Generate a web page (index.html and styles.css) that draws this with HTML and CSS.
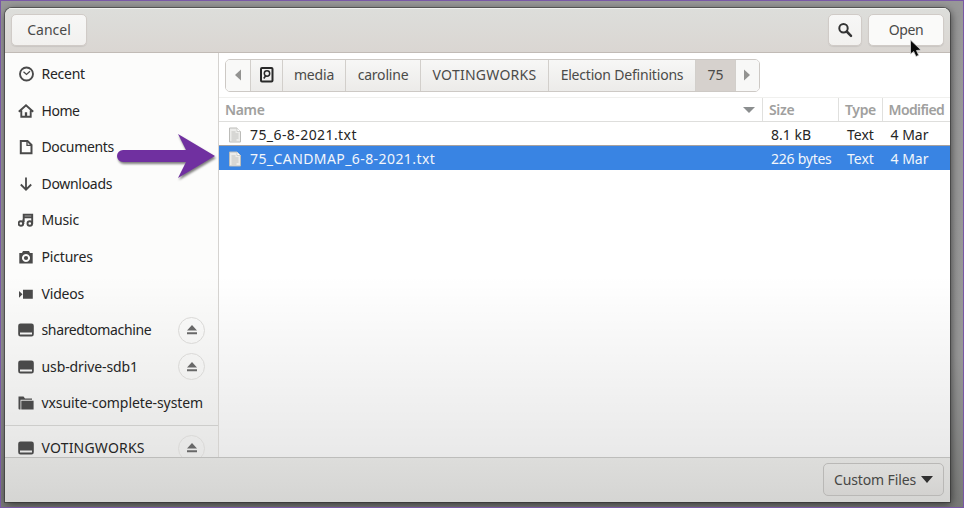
FILE: index.html
```html
<!DOCTYPE html>
<html lang="en">
<head>
<meta charset="utf-8">
<title>Open File</title>
<link rel="stylesheet" href="styles.css">
</head>
<body>
<svg class="defs" width="0" height="0" aria-hidden="true">
  <symbol id="drive" viewBox="0 0 16 16"><path fill-rule="evenodd" d="M2.500 1.500h11Q15.800 1.500 15.800 3.700v8.600q0 2.200-2.300 2.200h-11Q.2 14.500.2 12.300V3.700Q.2 1.500 2.500 1.500zM2 10.500v2h12v-2z"/></symbol>
  <symbol id="eject" viewBox="0 0 12 12"><path d="M6 1l5 5.500H1zM1 8.300h10V10.300H1z"/></symbol>
  <symbol id="file" viewBox="0 0 14 16"><path d="M1.500 1h7.500l3.500 3.500V15h-11z" fill="#ececea" stroke="#bcbcb9"/><path d="M9 1v3.500h3.500" fill="#fff" stroke="#c6c6c3" stroke-width=".8"/><path d="M3.500 5h4M3.500 7h7M3.500 9h7M3.500 11h7M3.500 13h5" stroke="#bdbdba" stroke-width=".9"/></symbol>
</svg>
<div class="window">
  <header class="titlebar">
    <button class="btn cancel"><span>Cancel</span></button>
    <div class="actions">
      <button class="btn search" aria-label="Search"><svg width="16" height="16" viewBox="0 0 16 16" fill="none" stroke="#343434"><circle cx="6.500" cy="6.300" r="4.200" stroke-width="2"/><path d="M9.700 9.500l4.300 4.300" stroke-width="2.500" stroke-linecap="round"/></svg></button>
      <button class="btn open"><span>Open</span></button>
    </div>
  </header>
  <main class="content">
    <nav class="places">
      <a class="place"><svg viewBox="0 0 16 16" fill="none" stroke="#4a4a4a"><circle cx="8.500" cy="8" r="6.500" stroke-width="1.900"/><path d="M5.500 5.700l3 2.700 3.500-3.200" stroke-width="1.300"/></svg><span class="recent">Recent</span></a>
      <a class="place"><svg viewBox="0 0 16 16" fill="none" stroke="#4a4a4a"><path d="M.8 8.700L8 2.200l7.200 6.500M3.300 7.500v6.200h9.400V7.500" stroke-width="1.900"/><path d="M8 14V9.300" stroke-width="2.300"/></svg><span class="home">Home</span></a>
      <a class="place"><svg viewBox="0 0 16 16" fill="none" stroke="#4a4a4a"><path d="M2.800 2h6.700L13.500 6v8.300H2.800z" stroke-width="2"/><path d="M9 2v4.300h4.300" stroke-width="1.300"/></svg><span class="documents">Documents</span></a>
      <a class="place"><svg viewBox="0 0 16 16" fill="none" stroke="#4a4a4a" stroke-width="1.800"><path d="M8 1.500v12M2.800 8.500L8 13.700l5.200-5.200"/></svg><span class="downloads">Downloads</span></a>
      <a class="place"><svg viewBox="0 0 16 16" fill="none" stroke="#4a4a4a" stroke-width="1.900"><circle cx="2.900" cy="11.500" r="2.300"/><circle cx="11.800" cy="11.500" r="2.300"/><path d="M5.300 12V7.500M5.700 10V2.700h8.500V12M5.500 5.200h8"/></svg><span class="music">Music</span></a>
      <a class="place"><svg viewBox="0 0 16 16" fill="#4a4a4a"><path fill-rule="evenodd" d="M5 2h6l1 2h2.700v10.500H1.300V4H4zM8 4.900a4 4 0 1 0 .01 0z"/><circle cx="8" cy="9" r="2.100"/></svg><span class="pictures">Pictures</span></a>
      <a class="place"><svg viewBox="0 0 16 16" fill="#4a4a4a"><path d="M5 3.800h9.800v9H5zM1 5l3.500 3.300L1 11.700z"/></svg><span class="videos">Videos</span></a>
      <a class="place"><svg fill="#4a4a4a"><use href="#drive"/></svg><span class="shared">sharedtomachine</span><i class="eject"><svg><use href="#eject"/></svg></i></a>
      <a class="place"><svg fill="#4a4a4a"><use href="#drive"/></svg><span class="usb">usb-drive-sdb1</span><i class="eject"><svg><use href="#eject"/></svg></i></a>
      <a class="place"><svg viewBox="0 0 16 16" fill="#4a4a4a"><path d="M.5 1.500h5l1.500 2h7v1.300H2.500V14.500H1.500Q.5 14.500.5 13.500z"/><path d="M3.300 5.700h12.300v8.800H3.300z"/></svg><span class="vxsuite">vxsuite-complete-system</span></a>
      <a class="place mounted"><svg fill="#4a4a4a"><use href="#drive"/></svg><span class="voting">VOTINGWORKS</span><i class="eject"><svg><use href="#eject"/></svg></i></a>
    </nav>
    <section class="browser">
      <div class="pathbar">
        <button class="crumb back" aria-label="Back"><svg width="8" height="12" viewBox="0 0 8 12"><path d="M7 .5v11L1 6z" fill="#939391"/></svg></button>
        <button class="crumb disk" aria-label="File system"><svg width="16" height="16" viewBox="0 0 16 16" fill="none" stroke="#292929"><rect x="2" y="1" width="11.500" height="13.500" rx="1" stroke-width="2"/><circle cx="8" cy="6.500" r="2.700" stroke-width="1.500"/><path d="M4.800 11.500l2.200-3.200" stroke-width="1.600"/></svg></button>
        <button class="crumb media"><span>media</span></button>
        <button class="crumb caroline"><span>caroline</span></button>
        <button class="crumb works"><span>VOTINGWORKS</span></button>
        <button class="crumb election"><span>Election Definitions</span></button>
        <button class="crumb current"><span>75</span></button>
        <button class="crumb next" aria-label="Forward"><svg width="8" height="12" viewBox="0 0 8 12"><path d="M1 .5v11L7 6z" fill="#939391"/></svg></button>
      </div>
      <div class="row head">
        <div class="cell name"><span>Name</span><svg class="sort" width="12" height="6" viewBox="0 0 12 6"><path d="M0 0h12L6 6z" fill="#8b8e8f"/></svg></div>
        <div class="cell size"><span>Size</span></div><div class="cell type"><span>Type</span></div><div class="cell date"><span class="modified">Modified</span></div>
      </div>
      <div class="row">
        <div class="cell name"><svg class="file"><use href="#file"/></svg><span class="file-name">75_6-8-2021.txt</span></div>
        <div class="cell size"><span>8.1 kB</span></div><div class="cell type"><span>Text</span></div><div class="cell date"><span>4 Mar</span></div>
      </div>
      <div class="row selected">
        <div class="cell name"><svg class="file"><use href="#file"/></svg><span class="file-name">75_CANDMAP_6-8-2021.txt</span></div>
        <div class="cell size"><span class="bytes">226 bytes</span></div><div class="cell type"><span>Text</span></div><div class="cell date"><span>4 Mar</span></div>
      </div>
    </section>
  </main>
  <footer class="bottom"><button class="filter"><span>Custom Files</span><svg width="12" height="7" viewBox="0 0 12 7"><path d="M0 0h12L6 7z" fill="#303030"/></svg></button></footer>
</div>
<svg class="arrow" width="106" height="52" viewBox="0 0 106 52"><path d="M8 18h63L63 2l37 22L63 46l8-16H8a6 6 0 0 1 0-12z" fill="#7030a0"/></svg>
<svg class="pointer" width="14" height="20" viewBox="0 0 14 20"><path d="M1.500 1v14l3.200-2.500 2.300 5 2.700-1.200-2.200-4.800 4.500-.5z" fill="#080808" stroke="#d5d5d5" stroke-width=".8"/></svg>
</body>
</html>
```

FILE: styles.css
```css
* { box-sizing: border-box; }
html, body { height: 100%; }
body {
  margin: 0;
  padding: 7px 13px 5px 4px;
  overflow: hidden;
  border: 1px solid #7958a6;
  background: linear-gradient(#989898, #969696 70%, #777876);
  font: 14px/20px "Noto Sans", sans-serif;
  color: #252525;
}
.defs { position: absolute; }
button { font: inherit; color: inherit; margin: 0; padding: 0; display: flex; align-items: center; justify-content: center; }
span { white-space: nowrap; }
svg { flex: none; }
.window {
  height: 494px;
  display: flex;
  flex-direction: column;
  overflow: hidden;
  border-radius: 7px 7px 0 0;
  background: #fff;
  box-shadow: 0 0 0 1px rgba(50, 50, 50, .55), 1px 2px 8px rgba(0, 0, 0, .6);
}
.titlebar {
  height: 45px;
  flex: none;
  display: flex;
  justify-content: space-between;
  align-items: flex-start;
  padding: 6px 6px 0;
  background: linear-gradient(#dddedb, #dad6d2);
  border-bottom: 1px solid #c1bbb6;
  box-shadow: inset 0 1px #f0f1ef;
}
.btn {
  height: 32px;
  border: 1px solid #d0cbc7;
  border-radius: 5px;
  background: linear-gradient(#f7f7f6, #f2f1ef);
  box-shadow: 0 1px 1px rgba(0, 0, 0, .08);
  color: #4a4a48;
}
.cancel { width: 76px; }
.search { width: 34px; }
.open { width: 76px; background: #fafaf9; letter-spacing: -.4px; }
.actions { display: flex; gap: 6px; }
.content {
  flex: 1;
  min-height: 0;
  display: flex;
  background: linear-gradient(transparent 55%, rgba(0, 0, 0, .085));
}
.places {
  width: 214px;
  flex: none;
  overflow: hidden;
  padding-top: 3px;
  border-right: 1px solid #d5d3d0;
  background: rgba(120, 110, 70, .025);
}
.place {
  height: 36.55px;
  display: flex;
  align-items: center;
  padding: 0 13px;
}
.place > svg { width: 16px; height: 16px; margin-right: 7.500px; }
.recent { letter-spacing: -.25px; }
.home { letter-spacing: -.45px; }
.documents { letter-spacing: -.35px; }
.downloads { letter-spacing: -.3px; }
.music, .videos, .pictures { letter-spacing: -.18px; }
.shared { letter-spacing: -.36px; }
.usb { letter-spacing: -.1px; }
.vxsuite { letter-spacing: -.08px; }
.voting { letter-spacing: .2px; }
.eject {
  width: 27px;
  height: 27px;
  display: grid;
  place-items: center;
  margin-left: auto;
  border: 1px solid #dad9d7;
  border-radius: 50%;
}
.eject svg { width: 12px; height: 12px; fill: #686868; }
.mounted { height: 45px; border-top: 1px solid #cdcdcb; margin-top: 4px; }
.browser { flex: 1; min-width: 0; }
.pathbar {
  width: 535px;
  height: 33px;
  display: flex;
  margin: 6px 0 5px 6px;
  overflow: hidden;
  border: 1px solid #cdc9c5;
  border-radius: 5px;
}
.crumb {
  padding-bottom: 1px;
  border: 0;
  border-right: 1px solid #d2cfcb;
  background: linear-gradient(#f7f7f6, #ecebe9);
  color: #4b4b49;
}
.back { width: 25px; background: #f9f9f8; }
.disk { width: 32px; }
.media { width: 63px; letter-spacing: -.2px; }
.caroline { width: 75px; letter-spacing: -.2px; }
.works { width: 128px; letter-spacing: .25px; }
.election { width: 147px; letter-spacing: -.2px; }
.current { width: 40px; background: #d6d1cd; }
.next { flex: 1; border-right: 0; padding-right: 2px; background: #f8f8f7; }
.row { height: 24px; display: flex; }
.cell { display: flex; align-items: center; padding: 1px 0 0 8px; }
.cell.name { width: 544px; padding-left: 9px; }
.size { width: 76px; }
.type { width: 43.500px; }
.date { flex: 1; }
.bytes { letter-spacing: -.25px; }
.head { height: 25px; border-top: 1px solid #f0f0ee; border-bottom: 1px solid #dededc; color: #a0a09e; font-weight: 600; letter-spacing: -.35px; }
.head .cell { border-right: 1px solid #e0e0de; padding: 0 0 0 6px; }
.head .cell:last-child { border-right: 0; }
.modified { letter-spacing: -.6px; }
.sort { margin: 0 7px 0 auto; }
.file { width: 14px; height: 16px; margin-right: 8px; }
.file-name { letter-spacing: .42px; }
.selected { background: #3984e3; color: #f2f6fb; box-shadow: 0 -1px #a8a19e; }
.bottom {
  height: 45px;
  flex: none;
  display: flex;
  justify-content: flex-end;
  padding: 5px 6px;
  border-top: 1px solid #bdbdbb;
  background: linear-gradient(#dddddb, #d5d5d3);
}
.filter {
  width: 121px;
  height: 33px;
  gap: 5px;
  border: 1px solid #b9b8b6;
  border-radius: 5px;
  background: linear-gradient(#dededc, #d3d2d0);
  color: #474745;
  letter-spacing: -.12px;
}
.arrow { position: absolute; left: 115px; top: 132px; overflow: visible; filter: drop-shadow(1px 2px 1px rgba(0, 0, 0, .5)); }
.pointer { position: absolute; left: 909px; top: 39px; }
```
